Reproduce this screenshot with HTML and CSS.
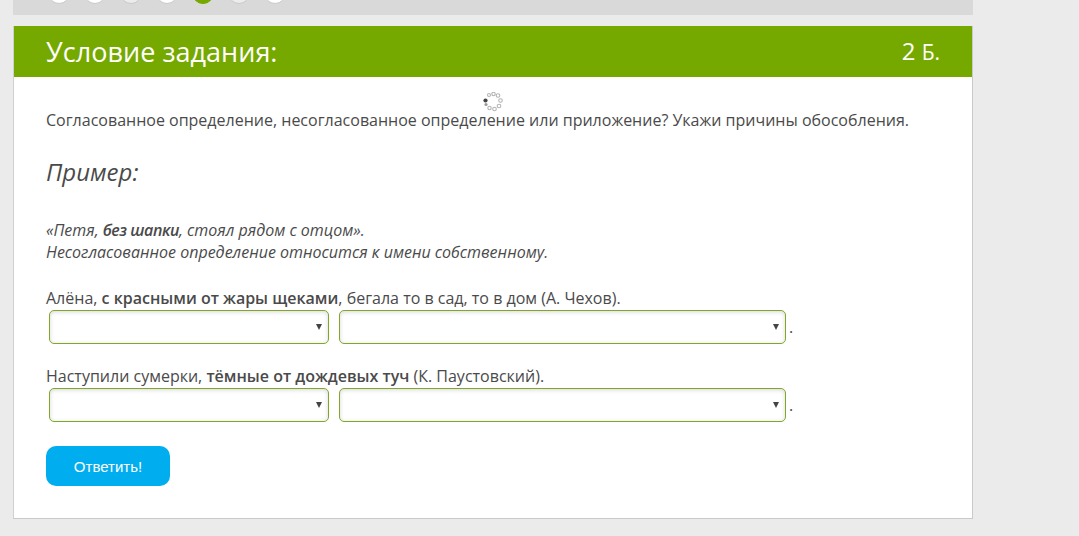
FILE: index.html
```html
<!DOCTYPE html>
<html lang="ru">
<head>
<meta charset="utf-8">
<title>Условие задания</title>
<link rel="stylesheet" href="styles.css">
</head>
<body>
<div class="page">
  <div class="steps">
    <span class="dot"></span><span class="dot"></span><span class="dot dot-muted"></span><span class="dot"></span><span class="dot dot-active"></span><span class="dot dot-muted"></span><span class="dot"></span>
  </div>
  <section class="card">
    <header class="card-head">
      <h1 class="card-title">Условие задания:</h1>
      <span class="card-score">2 <small class="score-unit">Б.</small></span>
    </header>
    <div class="card-body">
      <svg class="spinner" width="20" height="20" viewBox="0 0 20 20">
        <g fill="#fff" stroke="#b4b4b4" stroke-width="1.1">
          <circle cx="6" cy="3" r="1.5"/>
          <circle cx="10.5" cy="2" r="1.7"/>
          <circle cx="15" cy="3.5" r="1.8"/>
          <circle cx="17.5" cy="8.5" r="1.8"/>
          <circle cx="16" cy="14" r="1.8"/>
          <circle cx="11.5" cy="17" r="1.8"/>
          <circle cx="6.5" cy="16" r="1.7"/>
        </g>
        <circle cx="3" cy="12.5" r="1.6" fill="#9a9a9a"/>
        <circle cx="2.5" cy="8.5" r="2.1" fill="#444"/>
      </svg>
      <p class="lead">Согласованное определение, несогласованное определение или приложение? Укажи причины обособления.</p>
      <h2 class="example-title">Пример:</h2>
      <p class="example"><span>«Петя, <b class="strong">без шапки</b>, стоял рядом с отцом».</span><br><span>Несогласованное определение относится к имени собственному.</span></p>
      <div class="task">
        <p class="sentence">Алёна, <b class="strong">с красными от жары щеками</b>, бегала то в сад, то в дом (А. Чехов).</p>
        <div class="answers">
          <span class="pick pick-short"><select class="native"><option></option></select></span>
          <span class="pick pick-long"><select class="native"><option></option></select></span>
          <span class="period">.</span>
        </div>
      </div>
      <div class="task">
        <p class="sentence">Наступили сумерки, <b class="strong">тёмные от дождевых туч</b> (К. Паустовский).</p>
        <div class="answers">
          <span class="pick pick-short"><select class="native"><option></option></select></span>
          <span class="pick pick-long"><select class="native"><option></option></select></span>
          <span class="period">.</span>
        </div>
      </div>
      <button class="submit" type="button">Ответить!</button>
    </div>
  </section>
</div>
</body>
</html>
```
FILE: styles.css
```css
* { box-sizing: border-box; }
html, body { margin: 0; height: 536px; overflow: hidden; }
body {
  background: #ebebeb;
  font-family: "Open Sans", "Noto Sans", sans-serif;
  color: #4a4a4a;
}
.page { width: 960px; margin-left: 13px; }
.steps {
  height: 15px;
  background: #d9d9d9;
  display: flex;
  gap: 14px;
  padding-left: 35px;
  overflow: hidden;
  align-items: flex-start;
}
.dot {
  flex: none;
  width: 22px;
  height: 22px;
  margin-top: -18px;
  border-radius: 50%;
  background: #fff;
  border: 1px solid #c9c9c9;
}
.dot-muted { background: #ececec; }
.dot-active { background: #76a900; border-color: #76a900; }
.card {
  margin-top: 11px;
  background: #fff;
  border: 1px solid #c9c9c9;
  border-top: 0;
  border-left-color: #d0d0d0;
  height: 493px;
}
.card-head {
  height: 51px;
  background: #76a900;
  color: #fff;
  display: flex;
  align-items: center;
  justify-content: space-between;
  padding: 0 32px 0 32px;
}
.card-title { margin: 0; font-size: 27px; font-weight: 400; line-height: 51px; letter-spacing: .03px; }
.card-score { font-size: 24px; line-height: 51px; }
.score-unit { font-size: 21px; }
.card-body { position: relative; padding: 33px 32px 0 32px; }
.spinner { position: absolute; left: 469px; top: 15px; }
.lead { margin: 0; font-size: 16px; line-height: 20px; }
.example-title {
  margin: 27px 0 0;
  font-size: 24px;
  font-weight: 400;
  font-style: italic;
  line-height: 30px;
}
.example {
  margin: 32px 0 0;
  font-size: 16px;
  line-height: 22px;
  font-style: italic;
}
.strong { font-weight: 600; }
.example .strong { letter-spacing: -.45px; }
.task { margin-top: 24px; }
.task + .task { margin-top: 21px; }
.sentence { margin: 0; font-size: 16px; line-height: 22px; }
.answers { display: flex; align-items: center; padding-left: 3px; margin-top: 1px; }
.pick {
  position: relative;
  display: block;
  height: 34px;
  flex: none;
  background: #fff;
  border: 1px solid #80a828;
  border-radius: 5px;
  box-shadow: inset 0 1px 4px rgba(0,0,0,.16);
}
.pick::after {
  content: "";
  position: absolute;
  right: 6px;
  top: 13px;
  border-left: 3px solid transparent;
  border-right: 3px solid transparent;
  border-top: 6px solid #444;
}
.native {
  display: block;
  width: 100%;
  height: 100%;
  appearance: none;
  background: transparent;
  border: 0;
  outline: 0;
  font: 14px "Open Sans", sans-serif;
  color: #333;
}
.pick-short { width: 280px; }
.pick-long { width: 447px; margin-left: 10px; }
.period { margin-left: 3px; font-size: 16px; line-height: 34px; }
.submit {
  display: block;
  margin-top: 24px;
  width: 124px;
  height: 40px;
  border: 0;
  border-radius: 10px;
  background: #00aeef;
  color: #fff;
  font: 15px "Liberation Sans", Arial, sans-serif;
}
```
